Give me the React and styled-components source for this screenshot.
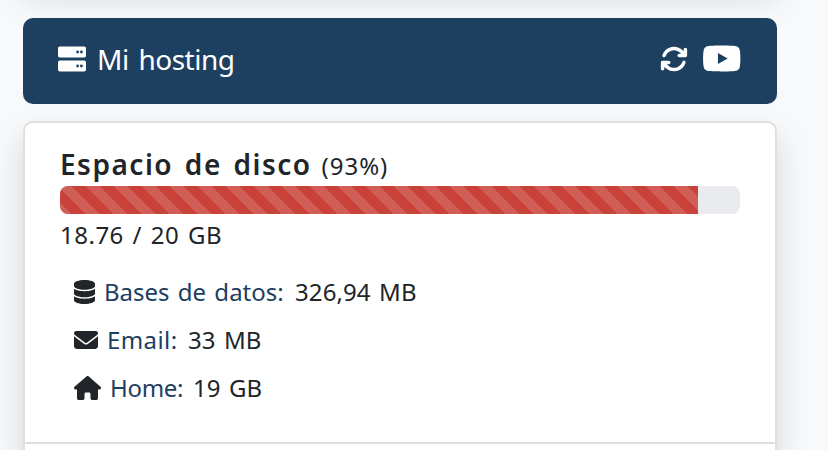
import React from "react";
import styled, { createGlobalStyle } from "styled-components";
import {
  FaArrowsRotate,
  FaYoutube,
  FaDatabase,
  FaEnvelope,
  FaHouse,
} from "react-icons/fa6";

const GlobalStyle = createGlobalStyle`
  * {
    box-sizing: border-box;
  }

  body {
    margin: 0;
    height: 450px;
    overflow: hidden;
    background: #f8f9fb;
    color: #212529;
    font-family: "Noto Sans", "Open Sans", sans-serif;
    font-size: 24px;
  }
`;

const Page = styled.div`
  display: flex;
  flex-direction: column;
  width: 754px;
  margin-left: 23px;
`;

const PreviousCard = styled.div`
  height: 40px;
  margin-top: -60px;
  background: white;
  box-shadow: 0 16px 32px rgba(0, 0, 0, 0.15);
`;

const Header = styled.header`
  position: relative;
  display: flex;
  align-items: center;
  height: 86px;
  margin-top: 38px;
  padding: 0 36px 4px 35px;
  border-radius: 10px;
  background: #1d4061;
  color: white;

  svg {
    display: block;
    flex: none;
  }
`;

const Title = styled.h1`
  flex: 1;
  margin: 0 0 0 11px;
  font-size: 28px;
  font-weight: 400;
  line-height: 38px;
  letter-spacing: -0.5px;
  word-spacing: 3px;
  white-space: nowrap;
`;

const Actions = styled.div`
  display: flex;
  align-items: center;
  gap: 14px;
`;

const YoutubeIcon = styled(FaYoutube)`
  width: 39.5px;
  height: 35px;
  margin-top: -2px;
`;

const Card = styled.section`
  height: 329px;
  margin-top: 17px;
  border: 2px solid #dfdfe0;
  border-bottom: 0;
  border-radius: 10px 10px 0 0;
  background: white;
  box-shadow: 0 16px 32px rgba(0, 0, 0, 0.15);
`;

const CardBody = styled.div`
  height: 321px;
  padding: 22px 35px 0;
  border-bottom: 2px solid #dfdfe0;
`;

const Heading = styled.div`
  display: flex;
  align-items: baseline;
  height: 41px;
  line-height: 38px;
  white-space: nowrap;
`;

const Strong = styled.h2`
  width: 261.5px;
  margin: 0;
  font-size: 28px;
  font-weight: 600;
  letter-spacing: 1.5px;
  word-spacing: 3px;
`;

const Text = styled.span`
  color: ${(props) => props.$color || "inherit"};
  letter-spacing: ${(props) => props.$spacing || 0}px;
  word-spacing: ${(props) => props.$word || 0}px;
  white-space: pre;
`;

const Progress = styled.div`
  height: 28px;
  border-radius: 8px;
  overflow: hidden;
  background: #e9ebef;
`;

const ProgressBar = styled.div`
  height: 100%;
  background-color: #c8423a;
  background-image: linear-gradient(
    45deg,
    rgba(255, 255, 255, 0.15) 25%,
    transparent 25%,
    transparent 50%,
    rgba(255, 255, 255, 0.15) 50%,
    rgba(255, 255, 255, 0.15) 75%,
    transparent 75%,
    transparent
  );
  background-position: -2px 0;
  background-size: 28px 28px;
`;

const Usage = styled.div`
  height: 55px;
  padding-top: 4px;
  line-height: 34px;
`;

const List = styled.ul`
  margin: 0;
  padding: 0 0 0 14px;
  list-style: none;
`;

const Item = styled.li`
  display: flex;
  align-items: center;
  height: 48px;
  padding-bottom: 2px;

  svg {
    flex: none;
  }

  span {
    margin-top: -2px;
  }
`;

const Label = styled(Text)`
  margin-left: 9px;
  width: ${(props) => props.$width}px;
  color: #1d4061;
`;

const ServerIcon = () => (
  <svg width="28" height="26" viewBox="0 0 28 26">
    <g fill="currentColor">
      <rect y="0.5" width="28" height="11" rx="1.8" />
      <rect y="14.5" width="28" height="11" rx="1.8" />
    </g>
    <g fill="#1d4061">
      <circle cx="19.6" cy="6" r="1.4" />
      <circle cx="23.4" cy="6" r="1.4" />
      <circle cx="19.6" cy="20" r="1.4" />
      <circle cx="23.4" cy="20" r="1.4" />
    </g>
  </svg>
);

const disk = { used: 18.76, total: 20 };

const items = [
  { icon: FaDatabase, w: 21, label: "Bases de datos:", value: "326,94 MB", width: 191, spacing: 0 },
  { icon: FaEnvelope, w: 24, label: "Email:", value: "33 MB", width: 81, spacing: 0.4 },
  { icon: FaHouse, w: 27, label: "Home:", value: "19 GB", width: 83, spacing: -0.3 },
];

const App = () => {
  return (
    <>
      <GlobalStyle />
      <Page>
        <PreviousCard />
        <Header>
          <ServerIcon />
          <Title>Mi hosting</Title>
          <Actions>
            <FaArrowsRotate size={28} />
            <YoutubeIcon />
          </Actions>
        </Header>
        <Card>
          <CardBody>
            <Heading>
              <Strong>Espacio de disco</Strong>
              <Text $spacing={1}>(93%)</Text>
            </Heading>
            <Progress>
              <ProgressBar style={{ width: `${(disk.used / disk.total) * 100}%` }} />
            </Progress>
            <Usage>
              <Text $spacing={0.5} $word={2}>
                {disk.used} / {disk.total} GB
              </Text>
            </Usage>
            <List>
              {items.map(({ icon: Icon, w, label, value, width, spacing }) => (
                <Item key={label}>
                  <Icon style={{ width: w, height: 24 }} />
                  <Label $width={width} $spacing={spacing} $word={2}>
                    {label}
                  </Label>
                  <Text $spacing={0.1} $word={2}>
                    {value}
                  </Text>
                </Item>
              ))}
            </List>
          </CardBody>
        </Card>
      </Page>
    </>
  );
};

export default App;
